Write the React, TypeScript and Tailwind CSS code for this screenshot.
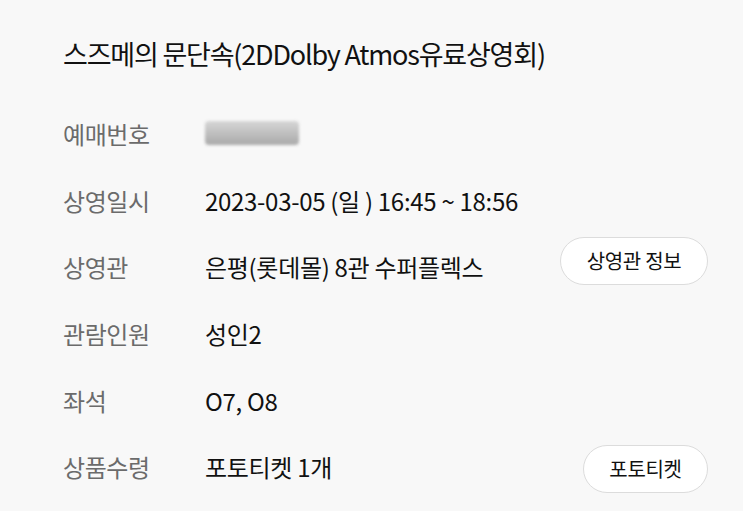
import React from 'react';

interface Row {
  label: string;
  value: React.ReactNode;
  action?: string;
  actionClass?: string;
}

const rows: Row[] = [
  {
    label: '예매번호',
    value: (
      <span className="inline-block h-[24px] w-[94px] translate-y-[1px] rounded-sm bg-gradient-to-b from-[#d6d6d6] to-[#a9a9a9] blur-[1.5px]" />
    ),
  },
  { label: '상영일시', value: '2023-03-05 (일 ) 16:45 ~ 18:56' },
  { label: '상영관', value: '은평(롯데몰) 8관 수퍼플렉스', action: '상영관 정보', actionClass: 'w-[148px] -translate-y-[6px]' },
  { label: '관람인원', value: '성인2' },
  { label: '좌석', value: 'O7, O8' },
  { label: '상품수령', value: '포토티켓 1개', action: '포토티켓', actionClass: 'w-[125px] h-[46px] translate-y-[2px]' },
];

const App: React.FC = () => {
  return (
    <div
      className="min-h-screen w-full bg-[#f8f8f8] text-[#111]"
      style={{ fontFamily: '"Noto Sans CJK KR", "Noto Sans", sans-serif' }}
    >
      <div className="pl-[63px] pr-[35px] pt-[34px]">
        <h1 className="text-[27px] font-normal leading-[40px] tracking-[-1.2px] text-[#111]">
          스즈메의 문단속(2DDolby Atmos유료상영회)
        </h1>

        <div className="mt-[27px] flex flex-col">
          {rows.map((row) => (
            <div key={row.label} className="flex h-[66.6px] items-center">
              <div className="w-[142px] text-[24px] tracking-[-0.4px] text-[#6b6b6b]">{row.label}</div>
              <div className="flex-1 text-[24px] tracking-[-0.3px] text-[#111]">{row.value}</div>
              {row.action && (
                <button
                  className={`${row.actionClass} h-[48px] rounded-full border border-[#dcdcdc] bg-white text-[20px] tracking-[-0.3px] text-[#111]`}
                >
                  {row.action}
                </button>
              )}
            </div>
          ))}
        </div>
      </div>
    </div>
  );
};

export default App;
